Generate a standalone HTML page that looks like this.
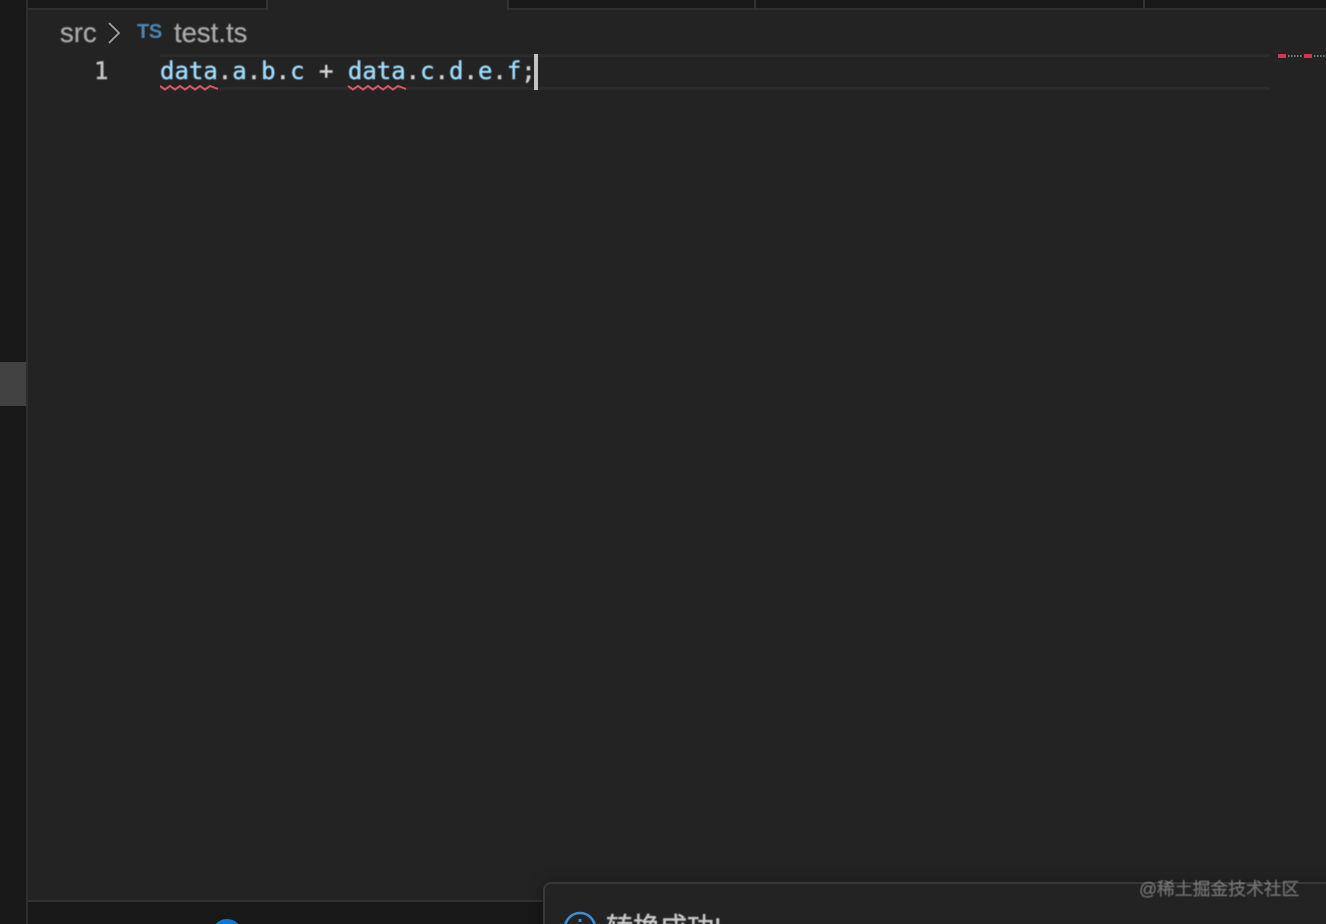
<!DOCTYPE html>
<html lang="zh">
<head>
<meta charset="utf-8">
<style>
html,body{margin:0;padding:0;width:1326px;height:924px;overflow:hidden;background:#232323;}
.a{position:absolute;}
#root{position:relative;width:1326px;height:924px;overflow:hidden;background:#232323;}
.mono{font-family:"DejaVu Sans Mono","Liberation Mono",monospace;font-size:24px;line-height:36px;white-space:pre;filter:blur(.4px);-webkit-text-stroke:.45px currentColor;}
.sans{font-family:"Liberation Sans",sans-serif;white-space:pre;filter:blur(.4px);-webkit-text-stroke:.3px currentColor;}
</style>
</head>
<body>
<div id="root">
  <!-- activity bar -->
  <div class="a" style="left:0;top:0;width:26px;height:924px;background:#181818;"></div>
  <div class="a" style="left:26px;top:0;width:2px;height:924px;background:#2e2e2e;"></div>
  <div class="a" style="left:0;top:362px;width:26px;height:44px;background:#424242;"></div>

  <!-- tabs -->
  <div class="a" style="left:28px;top:0;width:1298px;height:8px;background:#181818;"></div>
  <div class="a" style="left:28px;top:8px;width:1298px;height:2px;background:#2e2e2e;"></div>
  <div class="a" style="left:267px;top:0;width:240px;height:10px;background:#232323;"></div>
  <div class="a" style="left:266px;top:0;width:2px;height:10px;background:#333;"></div>
  <div class="a" style="left:507px;top:0;width:2px;height:10px;background:#333;"></div>
  <div class="a" style="left:754px;top:0;width:2px;height:10px;background:#333;"></div>
  <div class="a" style="left:1143px;top:0;width:2px;height:10px;background:#333;"></div>

  <!-- breadcrumbs -->
  <div class="a sans" style="left:60px;top:17px;font-size:27.5px;line-height:32px;color:#a9a9a9;">src</div>
  <svg class="a" style="left:106px;top:21px;" width="16" height="24" viewBox="0 0 16 24"><path d="M3 2 L13 12 L3 22" fill="none" stroke="#a0a0a0" stroke-width="1.8"/></svg>
  <div class="a sans" style="left:137px;top:20px;font-size:20px;line-height:24px;letter-spacing:-.3px;font-weight:700;color:#4d87b5;-webkit-text-stroke:0;">TS</div>
  <div class="a sans" style="left:174px;top:17px;font-size:27.5px;line-height:32px;color:#a9a9a9;">test.ts</div>

  <!-- current line highlight -->
  <div class="a" style="left:160px;top:54px;width:1110px;height:3px;background:#2b2b2b;border-radius:2px;"></div>
  <div class="a" style="left:160px;top:87px;width:1110px;height:3px;background:#2b2b2b;border-radius:2px;"></div>

  <!-- code -->
  <div class="a mono" style="left:94px;top:53px;color:#c6c6c6;">1</div>
  <div class="a mono" style="left:160px;top:53px;color:#d4d4d4;"><span style="color:#9cdcfe">data</span>.<span style="color:#9cdcfe">a</span>.<span style="color:#9cdcfe">b</span>.<span style="color:#9cdcfe">c</span> + <span style="color:#9cdcfe">data</span>.<span style="color:#9cdcfe">c</span>.<span style="color:#9cdcfe">d</span>.<span style="color:#9cdcfe">e</span>.<span style="color:#9cdcfe">f</span>;</div>

  <!-- squiggles -->
  <svg class="a" style="left:160px;top:83px;" width="250" height="10" viewBox="0 0 250 10">
    <path d="M0 3 L5 6.5 L10 3 L15 6.5 L20 3 L25 6.5 L30 3 L35 6.5 L40 3 L45 6.5 L50 3 L58 6" fill="none" stroke="#d9555f" stroke-width="2"/>
    <path d="M188 3 L193 6.5 L198 3 L203 6.5 L208 3 L213 6.5 L218 3 L223 6.5 L228 3 L233 6.5 L238 3 L246 6" fill="none" stroke="#d9555f" stroke-width="2"/>
  </svg>

  <!-- cursor -->
  <div class="a" style="left:534px;top:54px;width:4px;height:36px;background:#c4c4c4;"></div>

  <!-- minimap -->
  <svg class="a" style="left:1270px;top:50px;" width="56" height="12" viewBox="0 0 56 12">
    <rect x="8" y="4" width="8" height="4" fill="#d8324e"/>
    <rect x="34" y="4" width="8" height="4" fill="#d8324e"/>
    <g fill="#6f7d85">
      <rect x="18" y="5" width="1.5" height="2"/><rect x="21" y="5" width="1.5" height="2"/><rect x="24" y="5" width="1.5" height="2"/><rect x="27" y="5" width="1.5" height="2"/><rect x="30" y="5" width="1.5" height="2"/>
      <rect x="44" y="5" width="1.5" height="2"/><rect x="47" y="5" width="1.5" height="2"/><rect x="50" y="5" width="1.5" height="2"/><rect x="53" y="5" width="1.5" height="2"/>
    </g>
  </svg>

  <!-- bottom panel -->
  <div class="a" style="left:28px;top:900px;width:1298px;height:2px;background:#333;"></div>
  <div class="a" style="left:28px;top:902px;width:1298px;height:22px;background:#181818;"></div>
  <div class="a" style="left:212px;top:919px;width:30px;height:30px;border-radius:50%;background:#0f78d4;"></div>

  <!-- notification -->
  <div class="a" style="left:543px;top:882px;width:800px;height:80px;box-sizing:border-box;background:#232323;border:2px solid #383838;border-radius:8px;box-shadow:0 0 14px rgba(0,0,0,.35);"></div>
  <svg class="a" style="left:562px;top:908px;" width="36" height="16" viewBox="0 0 36 16">
    <circle cx="18" cy="20" r="15" fill="none" stroke="#3d8ed0" stroke-width="2.6"/>
    <rect x="16.5" y="11" width="3" height="3" fill="#3d8ed0"/>
  </svg>
  <div class="a sans" style="left:606px;top:910px;font-family:'Liberation Sans','Noto Sans CJK SC',sans-serif;font-size:27px;line-height:36px;color:#c8c8c8;-webkit-text-stroke:.5px currentColor;">转换成功!</div>

  <!-- watermark -->
  <div class="a sans" style="left:1139px;top:877px;font-family:'Liberation Sans','Noto Sans CJK SC',sans-serif;font-size:17.8px;line-height:24px;color:rgba(255,255,255,.33);-webkit-text-stroke:.2px currentColor;">@稀土掘金技术社区</div>
</div>
</body>
</html>
